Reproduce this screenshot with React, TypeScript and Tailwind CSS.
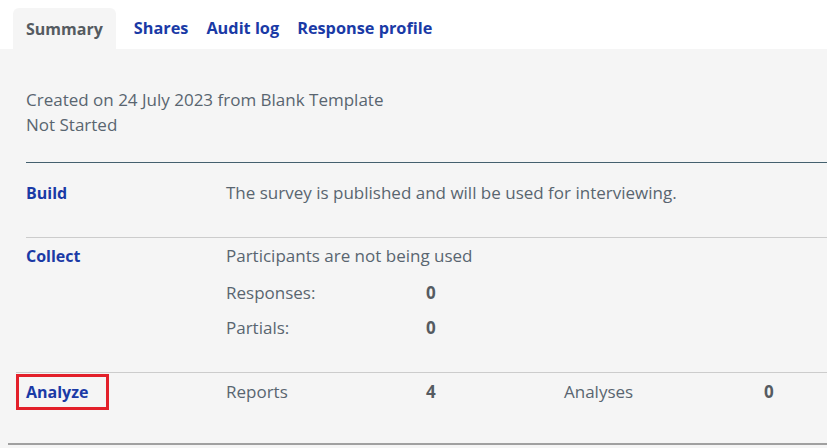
import React from "react";

const font = { fontFamily: '"Open Sans", "Liberation Sans", sans-serif' };

function Row({ label, boxed, children }: { label: string; boxed?: boolean; children: React.ReactNode }) {
  return (
    <div className="flex">
      <div className="w-[200px] shrink-0">
        {boxed ? (
          <span className="inline-block -ml-[10px] -mt-[6px] pl-[7px] pr-[18px] py-[3px] border-[3px] border-[#e3202a] text-[#1a3aa6] font-bold text-[16px]">
            {label}
          </span>
        ) : (
          <span className="text-[#1a3aa6] font-bold text-[16px]">{label}</span>
        )}
      </div>
      <div className="flex-1">{children}</div>
    </div>
  );
}

export default function App() {
  return (
    <div className="w-[827px] h-[448px] overflow-hidden bg-white text-[17px] text-[#596570]" style={font}>
      {/* Tabs */}
      <div className="h-[49px] flex items-end pl-[13px]">
        <div className="h-[41px] px-[13px] flex items-center bg-[#f5f5f5] rounded-t-md font-bold text-[16px] text-[#555b61]">Summary</div>
        <div className="h-[41px] flex items-center gap-[18px] pl-[18px] font-bold text-[16.3px] text-[#1a3aa6]">
          <span>Shares</span>
          <span>Audit log</span>
          <span>Response profile</span>
        </div>
      </div>

      <div className="bg-[#f5f5f5] h-[399px] pt-[38px]">
        <div className="pl-[26px] leading-[25px]">
          <div>Created on 24 July 2023 from Blank Template</div>
          <div>Not Started</div>
        </div>

        <div className="ml-[26px] mt-[25px] border-t border-[#44606e]" />

        <div className="pl-[26px] pt-[18px] pb-[32px] leading-[24px]">
          <Row label="Build">The survey is published and will be used for interviewing.</Row>
        </div>

        <div className="ml-[26px] border-t border-[#cccccc]" />

        <div className="pl-[26px] pt-[6px] pb-[32px] leading-[24px]">
          <Row label="Collect">
            <div>Participants are not being used</div>
            <div className="flex mt-[13px]">
              <span className="w-[200px]">Responses:</span>
              <span className="font-bold text-[#555b61]">0</span>
            </div>
            <div className="flex mt-[11px]">
              <span className="w-[200px]">Partials:</span>
              <span className="font-bold text-[#555b61]">0</span>
            </div>
          </Row>
        </div>

        <div className="ml-[16px] border-t border-[#cccccc]" />

        <div className="pl-[26px] pt-[7px] h-[70px] leading-[24px]">
          <Row label="Analyze" boxed>
            <div className="flex">
              <span className="w-[200px]">Reports</span>
              <span className="w-[138px] font-bold text-[#555b61]">4</span>
              <span className="w-[200px]">Analyses</span>
              <span className="font-bold text-[#555b61]">0</span>
            </div>
          </Row>
        </div>

        <div className="ml-[8px] border-t-2 border-[#a0a0a0]" />
      </div>
    </div>
  );
}
